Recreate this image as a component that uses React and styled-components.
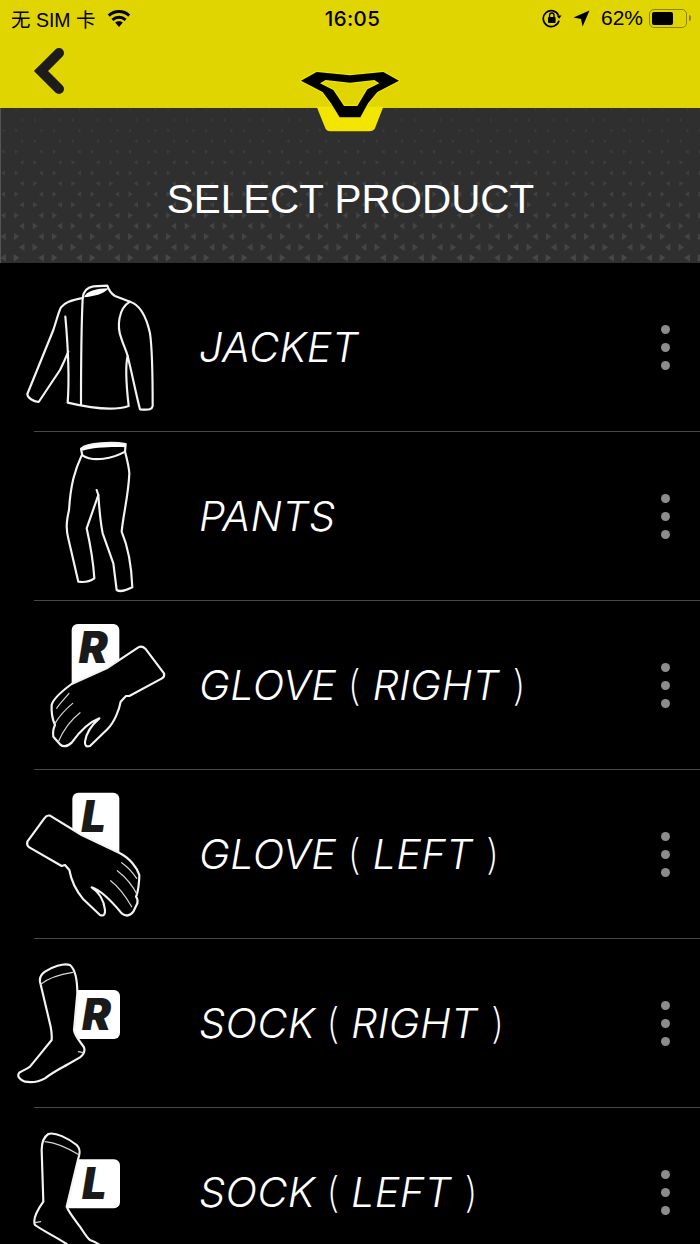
import React from "react";
import styled, { createGlobalStyle } from "styled-components";

const GlobalStyle = createGlobalStyle`
  html, body {
    margin: 0;
    padding: 0;
    background: #000000;
  }
`;

const Page = styled.div`
  position: relative;
  width: 700px;
  height: 1244px;
  overflow: hidden;
  background: #000000;
  font-family: "Liberation Sans", Arial, sans-serif;
`;

const Header = styled.header`
  height: 108px;
  background: #e0d500;
  color: #000000;
`;

const StatusBar = styled.div`
  display: grid;
  grid-template-columns: 1fr auto 1fr;
  align-items: center;
  height: 36px;
  padding: 0 9px 0 11px;
  font-size: 20px;
`;

const StatusLeft = styled.div`
  display: flex;
  align-items: center;
  gap: 11px;
`;

const Carrier = styled.span`
  font-family: "Liberation Sans", "Noto Sans CJK SC", sans-serif;
  font-size: 19.5px;
  white-space: nowrap;
`;

const Clock = styled.span`
  margin-left: 3px;
  font-family: Inter, sans-serif;
  font-size: 20.5px;
  font-weight: 500;
  letter-spacing: 0.4px;
`;

const StatusRight = styled.div`
  display: flex;
  align-items: center;
  justify-content: flex-end;
  gap: 11px;
`;

const Percent = styled.span`
  font-size: 21px;
  margin-left: 0;
  margin-right: -5px;
`;

const BatteryBody = styled.div`
  display: flex;
  width: 38px;
  height: 19px;
  box-sizing: border-box;
  padding: 2px;
  border: 1.5px solid #8c8400;
  border-radius: 5px;
`;

const BatteryLevel = styled.div`
  width: ${(props) => props.level}%;
  background: #000000;
  border-radius: 2px;
`;

const BatteryNub = styled.div`
  width: 2px;
  height: 6px;
  margin-left: -9px;
  background: #8c8400;
  border-radius: 0 2px 2px 0;
`;

const NavRow = styled.div`
  display: flex;
  padding: 10px 0 0 32px;
`;

const LogoWrap = styled.svg`
  position: absolute;
  left: 280px;
  top: 60px;
  width: 140px;
  height: 80px;
`;

const Banner = styled.section`
  position: relative;
  display: flex;
  align-items: center;
  justify-content: center;
  height: 155px;
  box-sizing: border-box;
  padding-top: 27px;
  background: #2f2f2f;
  border-left: 1px solid #555555;
  overflow: hidden;
`;

const Texture = styled.svg`
  position: absolute;
  left: 0;
  top: 0;
  width: 700px;
  height: 155px;
`;

const Title = styled.h1`
  position: relative;
  margin: 0;
  color: #ffffff;
  font-size: 40.4px;
  font-weight: 400;
  line-height: 48px;
`;

const List = styled.ul`
  margin: 0;
  padding: 0;
  list-style: none;
`;

const Row = styled.li`
  display: flex;
  align-items: center;
  height: 169px;
  box-sizing: border-box;
  margin-left: 34px;
  padding-right: 30px;
  border-bottom: 1px solid #484848;
`;

const Thumb = styled.svg`
  flex: none;
  width: 200px;
  height: 168px;
  margin-left: -34px;
  overflow: visible;
`;

const Label = styled.span`
  flex: 1;
  margin-left: -1px;
  color: #ffffff;
  font-family: Inter, sans-serif;
  font-size: 41.5px;
  font-style: italic;
  font-weight: 350;
  letter-spacing: 0.3px;
  line-height: 48px;
`;

const Paren = styled.span`
  font-style: normal;
  font-weight: 250;
  margin: 0 ${(props) => props.gap}px;
`;

const Kebab = styled.div`
  display: flex;
  flex-direction: column;
  gap: 9px;
`;

const Dot = styled.span`
  width: 9px;
  height: 9px;
  border-radius: 50%;
  background: #8c8c8c;
`;

const line = { fill: "none", stroke: "#f4f4f4", strokeWidth: 6.5, strokeLinejoin: "round", strokeLinecap: "round" };
const solid = { fill: "#000000", stroke: "#f4f4f4", strokeWidth: 6.5, strokeLinejoin: "round" };
const thin = { fill: "none", stroke: "#d8d8d8", strokeWidth: 3.5, strokeLinecap: "round" };

function Tag({ x, y, w, h, letter, tx, ty }) {
  return (
    <>
      <rect x={x} y={y} width={w} height={h} rx="18" fill="#ffffff" />
      <text
        x={tx}
        y={ty}
        fill="#1a1a1a"
        fontFamily="Inter, 'Liberation Sans', sans-serif"
        fontSize="130"
        fontStyle="italic"
        fontWeight="900"
      >
        {letter}
      </text>
    </>
  );
}

const JacketIcon = () => (
  <Thumb viewBox="0 -21 600 504">
    <path {...line} d="M248 84C250 62 262 52 280 49L322 47C326 60 332 70 345 78L390 95C420 104 438 135 450 190C456 230 458 270 458 408C456 418 450 421 420 418C410 380 398 320 383 258C376 285 376 320 386 408C340 424 270 414 203 398C208 330 206 250 196 140" />
    <path {...line} d="M248 84C215 90 195 96 183 112C176 125 170 150 160 180L82 372C82 384 100 394 116 396L180 300C190 280 198 262 205 245" />
    <path {...line} d="M390 95C355 115 350 170 364 205C370 225 378 240 383 258" />
    <path {...line} d="M248 85C243 190 243 300 243 405" />
    <path fill="#ffffff" d="M252 82C258 64 290 55 326 55C312 72 280 80 252 82Z" />
  </Thumb>
);

const PantsIcon = () => (
  <Thumb viewBox="0 486 600 504">
    <path fill="#ffffff" d="M243 536C262 516 340 516 377 522L376 532C340 530 280 532 248 542Z" />
    <path {...line} d="M243 536C262 518 340 516 377 522L375 545C340 565 280 578 247 556L243 536Z" />
    <path {...line} d="M245 556C225 600 212 640 207 720C198 760 198 780 206 810L235 935C255 938 270 934 283 925C280 880 270 820 260 775L295 675L290 660" />
    <path {...line} d="M295 675C298 720 300 750 308 790L340 880L350 960C362 968 380 960 397 952C395 900 388 840 365 785C370 730 385 680 388 610C386 585 380 565 375 545" />
  </Thumb>
);

const GloveRightIcon = () => (
  <Thumb viewBox="0 -27 600 504">
    <Tag x={215} y={42} w={143} h={210} letter="R" tx={236} ty={160} />
    <path {...solid} d="M215 222L320 175L415 112C424 107 430 110 436 116L492 190C494 198 492 202 486 205L388 258L378 258L362 275C358 300 342 338 322 358L270 408C258 412 254 406 255 395C258 370 275 345 298 325C272 335 248 352 215 398C200 412 190 412 180 403L160 380C158 365 160 355 165 345C156 325 154 300 155 285C158 272 170 255 215 222Z" />
    <path {...thin} d="M207 250C195 265 180 280 170 295M218 280C200 295 178 318 165 340M240 308C212 330 190 360 175 395" />
  </Thumb>
);

const GloveLeftIcon = () => (
  <Thumb viewBox="0 480 600 504">
    <Tag x={217} y={548} w={141} h={210} letter="L" tx={244} ty={667} />
    <path {...solid} d="M360 730L245 675L150 617C142 615 138 618 133 625L82 695C80 704 82 708 88 712L185 768L195 765L208 780C215 820 235 850 250 868L300 915C312 920 316 912 315 900C312 870 295 845 275 832C300 840 325 862 365 910C378 920 390 918 400 905L412 880C414 870 412 865 408 860C415 845 418 810 418 795C412 775 390 745 360 730Z" />
    <path {...thin} d="M365 758C385 772 400 790 410 805M352 782C375 800 400 830 412 855M332 812C355 830 378 860 395 890" />
  </Thumb>
);

const SockRightIcon = () => (
  <Thumb viewBox="0 -33 600 504">
    <Tag x={190} y={120} w={170} h={147} letter="R" tx={246} ty={241} />
    <path {...solid} d="M120 95C118 80 125 72 135 65C155 52 190 38 210 45C225 58 232 90 232 130L222 240C225 260 245 280 252 292C256 305 250 315 240 322L200 345C180 356 160 366 135 385C115 396 95 398 75 395C58 388 50 378 58 368C70 360 80 358 90 350C110 325 135 295 155 270C156 255 155 245 152 230L120 95Z" />
    <path {...thin} d="M122 103C150 80 185 72 218 67M235 305L250 308" />
  </Thumb>
);

const SockLeftIcon = () => (
  <Thumb viewBox="0 474 600 504">
    <Tag x={170} y={628} w={190} h={147} letter="L" tx={246} ty={748} />
    <path {...solid} d="M125 600C125 580 130 562 145 552C165 545 205 565 230 585C240 595 242 605 235 625L200 770C205 785 225 810 240 830C252 848 262 865 270 870C285 875 295 880 305 890L330 930L130 930L200 882C170 862 125 840 105 825C98 810 105 790 130 755L125 600Z" />
    <path {...thin} d="M135 575C170 578 205 595 238 615M105 818L122 815" />
  </Thumb>
);

const products = [
  { id: "jacket", name: "JACKET", Icon: JacketIcon },
  { id: "pants", name: "PANTS", Icon: PantsIcon },
  { id: "glove-r", name: "GLOVE", side: "RIGHT", Icon: GloveRightIcon },
  { id: "glove-l", name: "GLOVE", side: "LEFT", Icon: GloveLeftIcon },
  { id: "sock-r", name: "SOCK", side: "RIGHT", Icon: SockRightIcon },
  { id: "sock-l", name: "SOCK", side: "LEFT", Icon: SockLeftIcon },
];

// triangles of the banner grow and get stronger towards the bottom
const triangles = [];
for (let i = -1; i < 14; i++) {
  const y = 12 + i * 10.6;
  const size = 1.5 + (y / 155) * 2.5;
  const run = size * 0.75;
  const opacity = 0.45 + (y / 155) * 0.55;
  const shift = i % 2 === 0 ? 0 : 19.3;
  for (let k = -1; k < 20; k++) {
    const left = 20.7 + shift + k * 38;
    const right = 34.3 + shift + k * 38;
    triangles.push({
      key: `${i}-${k}`,
      opacity,
      points: `${left - run},${y} ${left + run},${y - size} ${left + run},${y + size}`,
    });
    triangles.push({
      key: `${i}-${k}-r`,
      opacity,
      points: `${right + run},${y} ${right - run},${y - size} ${right - run},${y + size}`,
    });
  }
}

function ProductRow({ name, side, Icon }) {
  return (
    <Row>
      <Icon />
      <Label>
        {name}
        {side && (
          <>
            <Paren gap={11}>(</Paren>
            {side}
            <Paren gap={13}>)</Paren>
          </>
        )}
      </Label>
      <Kebab>
        <Dot />
        <Dot />
        <Dot />
      </Kebab>
    </Row>
  );
}

export default function App() {
  return (
    <Page>
      <GlobalStyle />
      <Header>
        <StatusBar>
          <StatusLeft>
            <Carrier>无 SIM 卡</Carrier>
            <svg width="24" height="18" viewBox="0 0 24 18">
              <path fill="#000" d="M12 18l-3.8-4.6c2.1-1.7 5.5-1.7 7.6 0z" />
              <path fill="none" stroke="#000" strokeWidth="3" d="M5.4 10.8c3.8-3.4 9.4-3.4 13.2 0M1.8 6.6C7.6 1.2 16.4 1.2 22.2 6.6" />
            </svg>
          </StatusLeft>
          <Clock>16:05</Clock>
          <StatusRight>
            <svg width="20" height="20" viewBox="0 0 20 20">
              <path fill="none" stroke="#000" strokeWidth="1.7" d="M16.6 7.5A8 8 0 1 0 17 12.6" />
              <path fill="#000" d="M14.6 7.6h5l-2.5 3.2z" />
              <rect x="6" y="9" width="7.6" height="6" rx="1" fill="#000" />
              <path fill="none" stroke="#000" strokeWidth="1.4" d="M7.6 9V7.2a2.2 2.2 0 0 1 4.4 0V9" />
            </svg>
            <svg width="17" height="17" viewBox="0 0 17 17">
              <path fill="#000" d="M16.5.5L9.6 16.5 8 9 .5 7.4z" />
            </svg>
            <Percent>62%</Percent>
            <BatteryBody>
              <BatteryLevel level={66} />
            </BatteryBody>
            <BatteryNub />
          </StatusRight>
        </StatusBar>
        <NavRow>
          <svg width="36" height="48" viewBox="0 0 36 48">
            <path fill="none" stroke="#1c1c1c" strokeWidth="10" strokeLinecap="round" strokeLinejoin="miter" d="M27 7L9 25l18 18" />
          </svg>
        </NavRow>
      </Header>
      <Banner>
        <Texture viewBox="0 0 700 155">
          {triangles.map((t) => (
            <polygon key={t.key} points={t.points} fill="#474747" opacity={t.opacity} />
          ))}
        </Texture>
        <Title>SELECT PRODUCT</Title>
      </Banner>
      <LogoWrap viewBox="0 0 420 240">
        <path fill="#f2e600" d="M110 140H310L285 205Q280 214 268 214H150Q140 214 136 205Z" />
        <path fill="#000000" stroke="#f2e600" strokeWidth="7" strokeLinejoin="round" fillRule="evenodd" paintOrder="stroke" d="M63 62L110 36L210 46L310 36L357 62L292 96L264 130L241 172H179L153 130L128 96ZM120 70L160 90L192 138H232L262 88L298 70L283 60L210 68L137 60Z" />
      </LogoWrap>
      <List>
        {products.map((p) => (
          <ProductRow key={p.id} name={p.name} side={p.side} Icon={p.Icon} />
        ))}
      </List>
    </Page>
  );
}
